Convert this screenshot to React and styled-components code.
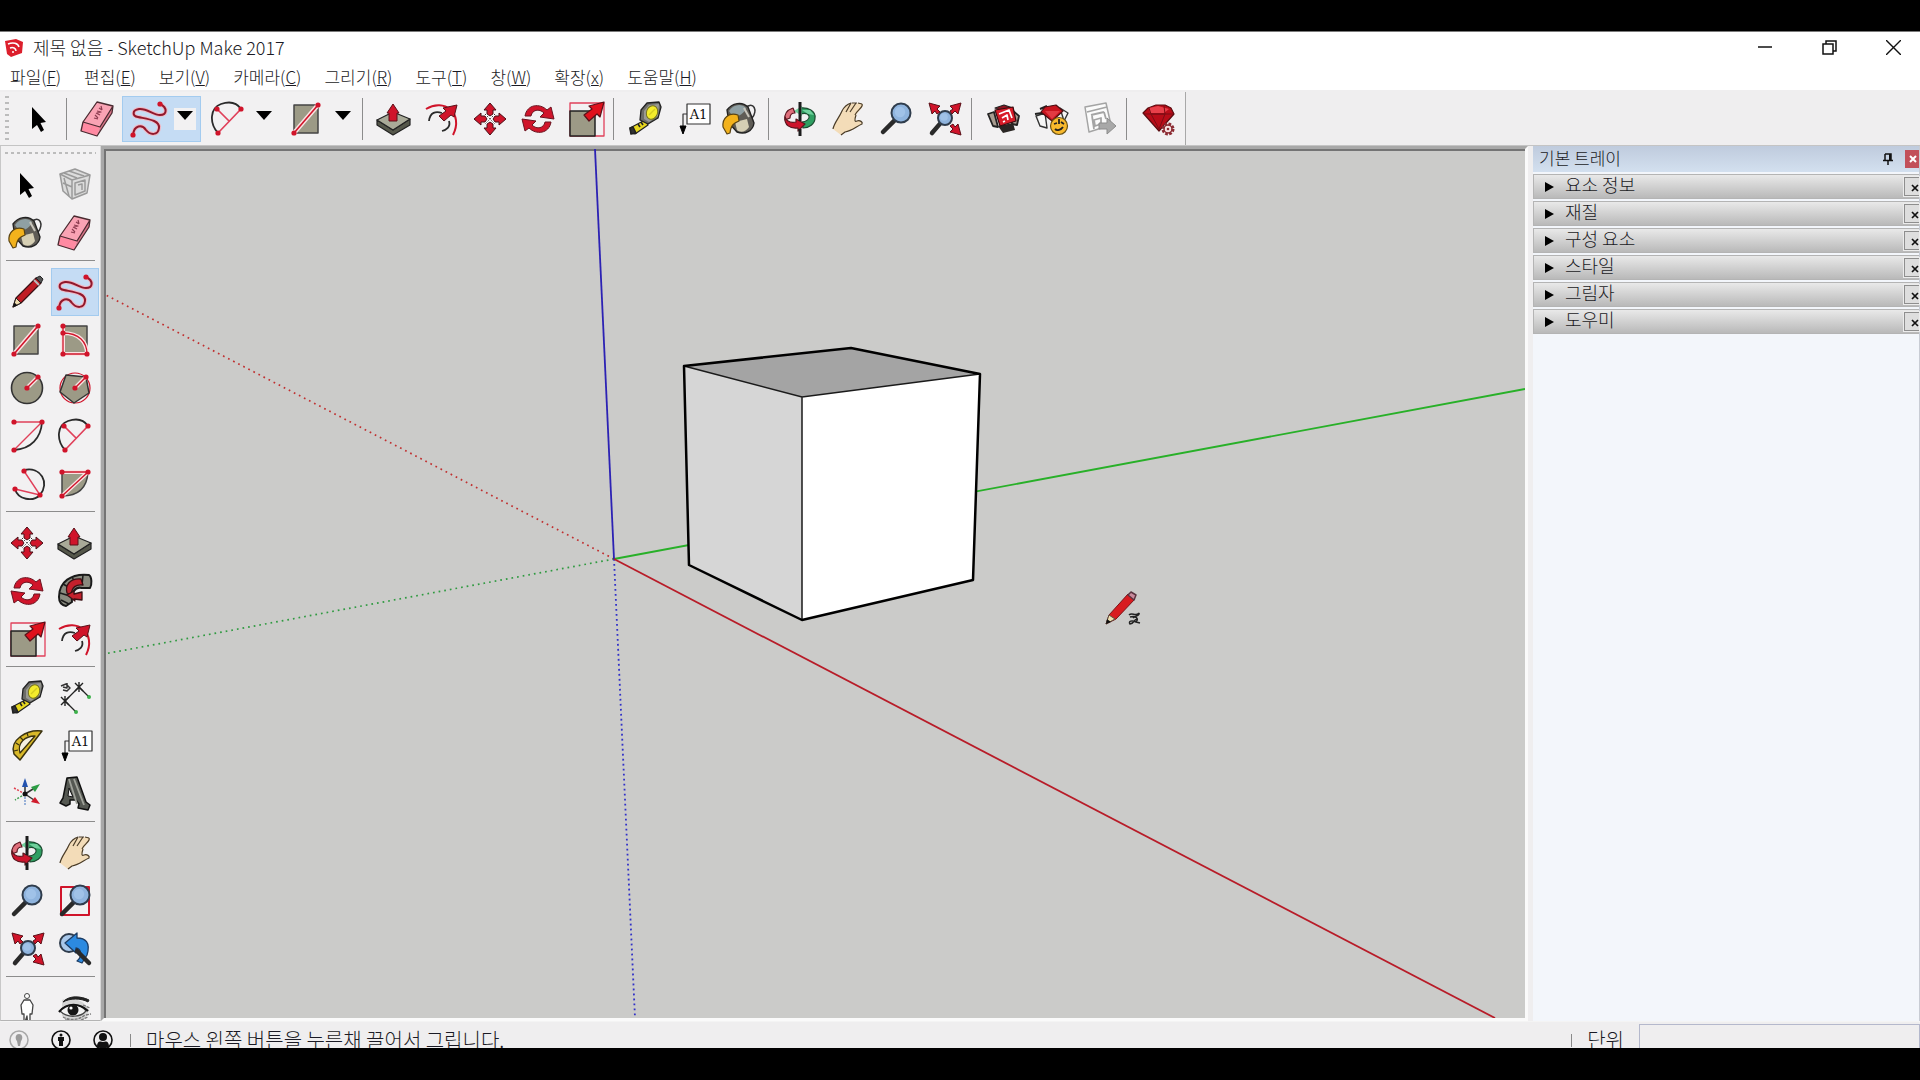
import React from 'react';
import styled, { createGlobalStyle, css } from 'styled-components';

const GlobalStyle = createGlobalStyle`
  *, *::before, *::after { box-sizing: border-box; }
  body { margin: 0; background: #000; }
  button { font: inherit; color: inherit; background: none; border: 0; padding: 0; margin: 0; }
  svg { display: block; flex: none; }
`;

const Screen = styled.div`
  height: 100vh;
  padding: 31px 0 32px;
  background: #000;
  display: flex;
  font-family: 'Noto Sans CJK KR', 'Open Sans', sans-serif;
  font-size: 18px;
  font-weight: 300;
  color: #1a1a24;
`;

const Window = styled.main`
  flex: 1;
  min-width: 0;
  display: flex;
  flex-direction: column;
  overflow: hidden;
  background: #efeeef;
  border-top: 1px solid #7a7a7a;
`;

const TitleBar = styled.header`
  height: 32px;
  flex: none;
  display: flex;
  align-items: center;
  gap: 9px;
  padding-left: 4px;
  background: #fff;
`;

const Title = styled.h1`
  margin: 0;
  flex: 1;
  font-size: 18px;
  font-weight: inherit;
  line-height: 30px;
  padding-bottom: 2px;
`;

const WindowControls = styled.div`
  display: flex;
  gap: 10px;
`;

const WindowButton = styled.button`
  width: 54px;
  height: 28px;
  padding-bottom: 2px;
  display: flex;
  align-items: center;
  justify-content: center;
`;

const MenuBar = styled.nav`
  height: 26px;
  flex: none;
  display: flex;
  align-items: center;
  gap: 23px;
  padding-left: 10px;
  background: #fff;
  font-size: 17px;
`;

const MenuItem = styled.button`
  white-space: nowrap;
  line-height: 26px;
`;

const TopBar = styled.div`
  height: 56px;
  flex: none;
  display: flex;
  border-bottom: 1px solid #c4c4c4;
`;

const Toolbar = styled.div`
  display: flex;
  align-items: center;
  background: #f2f1f2;
  margin-top: 2px;
  border-right: 1px solid #a8a8a8;
  padding: 2px 0;
`;

const Grip = styled.div`
  flex: none;
  ${(p) =>
    p.$vertical
      ? css`
          width: 4px;
          height: 46px;
          margin: 0 6px 0 5px;
          background: repeating-linear-gradient(to bottom, #bcbcbc 0 2px, transparent 2px 6px);
        `
      : css`
          height: 2px;
          margin: 6px 4px 7px;
          background: repeating-linear-gradient(to right, #bcbcbc 0 3px, transparent 3px 6px);
        `}
`;

const ToolGroup = styled.div`
  display: flex;
  align-items: center;
  padding: 0 3px 0 ${(p) => (p.$first ? 0 : 7)}px;
`;

const Divider = styled.div`
  width: 1px;
  height: 42px;
  background: #8c8c8c;
`;

const ToolButton = styled.button`
  width: 48px;
  height: ${(p) => (p.$tall ? 48 : 46)}px;
  display: flex;
  align-items: center;
  justify-content: center;
  ${(p) =>
    p.$active &&
    css`
      background: #c5dcf4;
      border: 1px solid #a3cbef;
    `}
`;

const SplitTool = styled.div`
  width: 79px;
  height: 46px;
  display: flex;
  align-items: center;
  justify-content: space-between;
  padding: 0 4px 0 6px;
  border: 1px solid ${(p) => (p.$active ? '#a3cbef' : 'transparent')};
  background: ${(p) => (p.$active ? '#c5dcf4' : 'transparent')};
`;

const DropButton = styled.button`
  width: 22px;
  height: 22px;
  display: flex;
  justify-content: center;
  padding-top: 3px;
  background: #f2f1f2;
`;

const Body = styled.div`
  flex: 1;
  min-height: 0;
  display: flex;
`;

const Dock = styled.aside`
  width: 101px;
  flex: none;
  overflow: hidden;
  background: #f2f1f2;
  border-bottom: 1px solid #b4b4b4;
  border-left: 1px solid #c8c8c8;
  border-right: 1px solid #d8d8d8;
`;

const DockGroup = styled.div`
  display: grid;
  grid-template-columns: 48px 48px;
  margin: 0 5px;
  padding: ${(p) => (p.$first ? 0 : 7)}px 0 3px;
  border-top: ${(p) => (p.$first ? 0 : 1)}px solid #8c8c8c;
  justify-content: center;
`;

const Viewport = styled.section`
  flex: 1;
  min-width: 0;
  margin-right: 5px;
  background: #cbcbc9;
  border: 3px solid #fafafa;
  border-left-color: #a8a8a8;
  border-top-color: #a8a8a8;
  box-shadow: inset 2px 2px #747474;
  overflow: hidden;
`;

const Scene = styled.svg`
  width: 100%;
  height: 100%;
`;

const Tray = styled.aside`
  width: 387px;
  flex: none;
  background: #f3f6fb;
  border-right: 1px solid #c8ccd4;
`;

const TrayHeader = styled.div`
  height: 26px;
  display: flex;
  align-items: center;
  padding-left: 6px;
  background: linear-gradient(#bfcbdd, #d3e0ef);
`;

const TrayTitle = styled.h2`
  margin: 0;
  flex: 1;
  font-size: 17px;
  font-weight: inherit;
  line-height: 22px;
  padding-bottom: 3px;
`;

const PinButton = styled.button`
  width: 18px;
  height: 18px;
  margin-right: 8px;
  display: flex;
  align-items: center;
  justify-content: center;
`;

const TrayClose = styled.button`
  width: 14px;
  height: 18px;
  display: flex;
  align-items: center;
  justify-content: flex-end;
  padding-right: 2px;
  background: #c2505a;
`;

const TrayList = styled.ul`
  list-style: none;
  margin: 0;
  padding: 2px 0 0;
`;

const TrayItem = styled.li`
  height: 25px;
  margin-bottom: 2px;
  display: flex;
  align-items: center;
  border: 1px solid #b4b4b4;
  border-right: 0;
  background: linear-gradient(#e9e9e9, #b9b9b9);
`;

const TrayToggle = styled.button`
  flex: 1;
  display: flex;
  align-items: center;
  gap: 11px;
  padding-left: 11px;
  line-height: 23px;
`;

const ItemLabel = styled.span`
  padding-bottom: 4px;
  line-height: 19px;
`;

const ItemClose = styled.button`
  width: 15px;
  height: 19px;
  display: flex;
  align-items: center;
  justify-content: flex-end;
  padding-top: 2px;
  background: #dedede;
  border: 1px solid #8e8e8e;
  border-right: 0;
  outline: 1px solid #ececec;
`;

const StatusBar = styled.footer`
  height: 27px;
  flex: none;
  overflow: hidden;
  display: flex;
  align-items: flex-start;
  border-top: 1px solid #f4f4f4;
`;

const StatusCell = styled.div`
  height: 36px;
  display: flex;
  align-items: center;
`;

const StatusButton = styled.button`
  width: 20px;
  height: 20px;
`;

const StatusIcons = styled(StatusCell)`
  gap: 22px;
  padding: 0 17px 0 9px;
`;

const StatusDivider = styled.div`
  width: 1px;
  height: 13px;
  background: #8a8a8a;
`;

const StatusText = styled(StatusCell)`
  flex: 1;
  padding-left: 15px;
  font-size: 20px;
  line-height: 36px;
  white-space: nowrap;
`;

const UnitLabel = styled.label`
  height: 36px;
  padding: 0 15px;
  line-height: 36px;
  font-size: 20px;
`;

const UnitInput = styled.input`
  width: 281px;
  height: 30px;
  margin-top: 2px;
  border: 1px solid #b4b8cc;
  background: #efeeef;
  font: inherit;
  padding: 0 6px;
`;

/* ---------- icons ---------- */

const RED = '#d0142a';
const ROSE = '#e0405a';
const KHAKI = '#9c9a86';

const Icon = ({ children, size = 40 }) => (
  <svg width={size} height={size} viewBox="0 0 40 40" fill="none" strokeLinejoin="round" aria-hidden="true">
    {children}
  </svg>
);

const Dot = ({ x, y }) => <circle cx={x} cy={y} r="2.6" fill={RED} />;

const ArrowNE = ({ x = 0, y = 0 }) => (
  <path
    transform={`translate(${x} ${y})`}
    d="M37 3L33 18L30 15L22 22L17 16L25 10L22 7Z"
    fill="#e0101c"
    stroke="#5a1018"
    strokeWidth="1.2"
  />
);

const Select = () => (
  <Icon>
    <path d="M13 8V30L18 26L22 33L25 31L21.500 24L27 23Z" fill="#000" />
  </Icon>
);

const Eraser = () => (
  <Icon>
    <g transform="translate(-1 0)">
      <path d="M20 3L36 7L23 28L6 23Z" fill="#f9a3b4" />
      <path d="M6 23L23 28L20 37L4 32Z" fill="#ff8aa2" />
      <path d="M36 7L35 14L20 37L23 28Z" fill="#d97488" />
      <path d="M20 3L36 7L35 14L20 37L4 32L6 23ZM6 23L23 28L36 7" stroke="#4a2a30" strokeWidth="1.300" />
      <path d="M17 19L21 20M18 16l3 3M19 14l4 2M20 12l4 1-4 1M22 9l3 2M24 7l1 4" stroke="#8c3c50" strokeWidth="1.200" />
    </g>
  </Icon>
);

const Freehand = () => (
  <Icon>
    <path d="M31 5C39 9 38 16 31 16C24 16 18 9 10 10C3 11 3 17 9 18C18 20 31 21 30 29C29 37 21 36 17 31C13 25 5 26 4 36" stroke="#f0b8c4" strokeWidth="4" />
    <path d="M31 5C39 9 38 16 31 16C24 16 18 9 10 10C3 11 3 17 9 18C18 20 31 21 30 29C29 37 21 36 17 31C13 25 5 26 4 36" stroke="#90182c" strokeWidth="2" />
    <Dot x={31} y={5} />
    <Dot x={4} y={36} />
  </Icon>
);

const TwoPointArc = () => (
  <Icon>
    <path d="M10 34C1 24 2 9 13 5C22 2 29 4 33 10" stroke="#2a2a2a" strokeWidth="1.800" />
    <path d="M10 34L33 10M9 10L21 22" stroke={ROSE} strokeWidth="1.700" />
    <Dot x={9} y={10} />
    <Dot x={33} y={10} />
    <Dot x={10} y={34} />
  </Icon>
);

const Rectangle = () => (
  <Icon>
    <path d="M7 6H31V34H7Z" fill={KHAKI} stroke="#444" strokeWidth="1.500" />
    <path d="M7 34L31 6" stroke="#fbe3e3" strokeWidth="4.500" />
    <path d="M7 34L31 6" stroke={RED} strokeWidth="1.600" />
    <Dot x={7} y={34} />
    <Dot x={31} y={6} />
  </Icon>
);

const RotatedRectangle = () => (
  <Icon>
    <path d="M8 6H32V34H8Z" fill={KHAKI} stroke="#444" strokeWidth="1.500" />
    <path d="M8 6V34H32C32 22 24 13 8 13" stroke="#fbe3e3" strokeWidth="4" />
    <path d="M8 6V34H32C32 22 24 13 8 13" stroke={RED} strokeWidth="1.300" />
    <Dot x={8} y={6} />
    <Dot x={8} y={13} />
    <Dot x={8} y={34} />
    <Dot x={32} y={34} />
  </Icon>
);

const CircleTool = () => (
  <Icon>
    <circle cx="20" cy="20" r="15.500" fill={KHAKI} stroke="#333" strokeWidth="1.600" />
    <path d="M20 20L31 9" stroke="#fbe3e3" strokeWidth="4" />
    <path d="M20 20L31 9" stroke={RED} strokeWidth="1.400" />
    <Dot x={20} y={20} />
    <Dot x={31} y={9} />
  </Icon>
);

const Polygon = () => (
  <Icon>
    <circle cx="20" cy="20" r="15" stroke={RED} strokeWidth="1.200" />
    <path d="M11 7L31 9L34 25L19 35L5 24Z" fill={KHAKI} stroke="#333" strokeWidth="1.500" />
    <path d="M20 20L31 9" stroke="#fbe3e3" strokeWidth="4" />
    <path d="M20 20L31 9" stroke={RED} strokeWidth="1.400" />
    <Dot x={20} y={20} />
    <Dot x={31} y={9} />
  </Icon>
);

const ArcTool = () => (
  <Icon>
    <path d="M35 6C34 22 24 33 7 34" stroke="#2a2a2a" strokeWidth="1.800" />
    <path d="M7 6H35L7 34" stroke={ROSE} strokeWidth="1.400" />
    <Dot x={7} y={6} />
    <Dot x={35} y={6} />
    <Dot x={7} y={34} />
  </Icon>
);

const ThreePointArc = () => (
  <Icon>
    <path d="M17 6C34 2 43 19 33 31C26 38 11 36 8 25" stroke="#2a2a2a" strokeWidth="1.800" />
    <path d="M17 7L33 31L8 25" stroke={ROSE} strokeWidth="1.400" />
    <Dot x={17} y={7} />
    <Dot x={8} y={25} />
    <Dot x={33} y={31} />
  </Icon>
);

const Pie = () => (
  <Icon>
    <path d="M7 8H33C32 24 24 32 7 32Z" fill={KHAKI} stroke="#444" strokeWidth="1.500" />
    <path d="M7 8H33L7 32" stroke="#fbe3e3" strokeWidth="4" />
    <path d="M7 8H33L7 32" stroke={RED} strokeWidth="1.400" />
    <Dot x={7} y={8} />
    <Dot x={33} y={8} />
    <Dot x={7} y={32} />
  </Icon>
);

const PushPull = () => (
  <Icon>
    <path d="M3 21V26L19 36L36 26V20L19 31Z" fill="#55574a" stroke="#222" strokeWidth="1.200" />
    <path d="M3 21L19 13L36 20L19 31Z" fill="#a9aa98" stroke="#222" strokeWidth="1.200" />
    <path d="M19 5L25 14H23V22H15V14H13Z" fill={RED} stroke="#5a1018" strokeWidth="1" />
  </Icon>
);

const Offset = () => (
  <Icon>
    <path d="M4 10C22 -1 42 14 31 36" stroke={RED} strokeWidth="2" />
    <path d="M7 22C8 13 14 12 20 14M27 22C29 28 24 31 20 32" stroke="#2a2a2a" strokeWidth="1.800" />
    <path d="M35 6L32 18L29 16L22 22L17 17L24 12L21 9Z" fill={RED} stroke="#5a1018" strokeWidth="1" />
  </Icon>
);

const Move = () => (
  <Icon>
    <circle cx="20" cy="20" r="7" fill="#fff" />
    {[0, 90, 180, 270].map((a) => (
      <path
        key={a}
        transform={`rotate(${a} 20 20)`}
        d="M20 4L26 11H23V15L20 17L17 15V11H14Z"
        fill={RED}
        stroke="#4a1018"
        strokeWidth="1"
      />
    ))}
    <path d="M15 15L25 25M25 15L15 25" stroke="#333" strokeWidth="1" strokeDasharray="1.500 1.500" />
  </Icon>
);

const Rotate = () => (
  <Icon>
    {[0, 180].map((a) => (
      <path
        key={a}
        transform={`rotate(${a} 20 20)`}
        d="M7 17C9 5 22 4 29 11L33 8L36 20L22 18L26 14C21 9 14 11 13 17Z"
        fill={RED}
        stroke="#6a1420"
        strokeWidth="1"
      />
    ))}
  </Icon>
);

const Scale = () => (
  <Icon>
    <path d="M4 4H38V37H4Z" stroke={ROSE} strokeWidth="1.300" />
    <path d="M4 12H29V37H4Z" fill={KHAKI} stroke="#222" strokeWidth="1.500" />
    <ArrowNE x={1} />
  </Icon>
);

const Tape = () => (
  <Icon>
    <path d="M20 21L23 26L10 35L6 34L5 29Z" fill="#e8d820" stroke="#222" strokeWidth="1.200" />
    <path d="M5 29L8 28L11 34L6 35ZM13 25l2 3M16 23l2 3" stroke="#222" strokeWidth="1.600" fill="#333" />
    <path d="M16 11L22 4L34 3L36 8L33 19L23 25L15 21Z" fill="#6c6c68" stroke="#222" strokeWidth="1.300" />
    <path d="M19 12L24 6L34 5L33 17L24 23L19 20Z" fill="#9a9a94" />
    <ellipse cx="27" cy="13.500" rx="5.500" ry="7" transform="rotate(20 27 13.500)" fill="#f4ec2c" stroke="#77741c" strokeWidth="1" />
    <path d="M24 16L30 10" stroke="#d6cc20" strokeWidth="1.500" />
  </Icon>
);

const TextTool = () => (
  <Icon>
    <path d="M14 15H10V28" stroke="#333" strokeWidth="1.200" />
    <path d="M7 27H13L10 35Z" fill="#000" stroke="#000" />
    <path d="M14 5H37V25H14Z" fill="#fff" stroke="#333" strokeWidth="1.200" />
    <text x="25.500" y="20" textAnchor="middle" fontFamily="'DejaVu Serif', serif" fontSize="13" fontWeight="400" fill="#111">A1</text>
  </Icon>
);

const Bucket = () => (
  <Icon>
    <g transform="translate(-3 0)">
      <path d="M27 9C36 1 40 12 34 19" stroke="#333" strokeWidth="1.600" />
      <path d="M9 11C14 4 24 2 30 8L36 24C35 32 27 36 19 33L11 24Z" fill="#5f5c56" stroke="#222" strokeWidth="1.400" />
      <path d="M11 12C15 5 24 4 28 9C27 14 20 18 15 18Z" fill="#8fa0a4" />
      <path d="M17 23L29 20L31 28C28 33 22 34 19 31Z" fill="#d6cfb4" />
      <path d="M26 9L31 18" stroke="#c9c6bc" strokeWidth="2" />
      <path d="M20 16C11 13 4 19 5 28L9 35L12 34C13 26 16 24 21 22Z" fill="#f3b21c" stroke="#5a4414" strokeWidth="1.200" />
    </g>
  </Icon>
);

const Orbit = () => (
  <Icon>
    <path d="M20 9C28 8 36 12 35 19C35 25 29 29 23 29L22 23C26 23 30 20 29 17C28 14 24 14 20 15Z" fill="#2f9f62" stroke="#1c4a30" strokeWidth="1.200" />
    <path d="M14 12L22 7V17Z M22 11h8l4 5-6-1z" fill="#6fd09c" />
    <path d="M13 9C7 11 4 15 5 21L10 19C10 16 12 14 15 14Z" fill="#e0707c" stroke="#5a1820" strokeWidth="1.200" />
    <path d="M5 18C7 23 11 24 16 23V20L25 25L18 32V29C10 30 4 26 5 18Z" fill="#cc142c" stroke="#5a1820" strokeWidth="1.200" />
    <path d="M20 3V22M20 30V37" stroke="#1c1c1c" strokeWidth="3" />
  </Icon>
);

const Hand = () => (
  <Icon>
    <path d="M5 30C6 24 11 19 14 12C17 6 20 5 23 5L25 4L28 5C31 3 34 4 35 6C35 9 29 13 28 17C28 20 26 22 28 22C31 20 35 22 34 25C29 27 24 32 17 33L13 36Z" fill="#f3dcb8" />
    <path d="M5 30C6 24 11 19 14 12C17 6 20 5 23 4L18 13M28 4L22 13M24 4L29 4M34 5C36 8 29 11 27 16M30 4L34 5M28 16C26 22 27 23 29 22C32 21 35 23 34 25C29 27 24 32 17 33L13 36" stroke="#4a3c28" strokeWidth="1.200" />
  </Icon>
);

const Lens = ({ x, y, r, hx, hy }) => (
  <>
    <path d={`M${x - r * 0.7} ${y + r * 0.8}L${hx} ${hy}`} stroke="#2a2a2a" strokeWidth="4.500" strokeLinecap="round" />
    <circle cx={x} cy={y} r={r} fill="#8fb4de" stroke="#2f3c4c" strokeWidth="2" />
    <circle cx={x - 1} cy={y - 1} r={r * 0.55} fill="#a0c2e8" />
  </>
);

const Zoom = () => (
  <Icon>
    <Lens x={25} y={14} r={9.500} hx={7} hy={33} />
  </Icon>
);

const ZoomWindow = () => (
  <Icon>
    <path d="M6 6H34V34H6Z" stroke={RED} strokeWidth="2" />
    <Lens x={25} y={14} r={9.500} hx={7} hy={33} />
  </Icon>
);

const CornerArrow = ({ angle }) => (
  <path
    transform={`rotate(${angle} 20 20)`}
    d="M4 4L15 7L12 10L15 13L12 15L10 12L7 15Z"
    fill={RED}
    stroke="#5a1018"
    strokeWidth="1"
  />
);

const ZoomExtents = () => (
  <Icon>
    <g transform="translate(1 0)">
      <Lens x={20} y={19} r={7} hx={7} hy={34} />
      <CornerArrow angle={0} />
      <CornerArrow angle={90} />
      <CornerArrow angle={180} />
    </g>
  </Icon>
);

const PreviousView = () => (
  <Icon>
    <circle cx="14" cy="14" r="9" fill="#a9c8ea" stroke="#2f3c4c" strokeWidth="2" />
    <path d="M10 14L22 4V9C30 9 36 13 32 26L27 34L22 32C27 28 27 20 21 19V24Z" fill="#2c8ae0" stroke="#1c3c64" strokeWidth="1.300" />
    <path d="M22 22L34 34" stroke="#2a2a2a" strokeWidth="4.500" strokeLinecap="round" />
  </Icon>
);

const Warehouse = () => (
  <Icon>
    <path d="M5 15L11 13L15 28L10 27ZM28 10L36 17L34 26L29 25Z" fill="#a89c90" stroke="#222" strokeWidth="1.800" />
    <path d="M15 27L30 24L32 31L20 34Z" fill="#2a2624" />
    <path d="M12 9L21 6L30 9L20 12Z" fill="#8e1420" stroke="#222" strokeWidth="1.200" />
    <path d="M12 11L30 8L33 22L17 27Z" fill="#d81c28" stroke="#3a0c10" strokeWidth="1.200" />
    <path d="M16 15L26 11L29 19M19 19L24 16L25 21M20 23L22 22" stroke="#fff" strokeWidth="1.700" />
  </Icon>
);

const ExtensionWarehouse = () => (
  <Icon>
    <path d="M5 17L14 14L16 29L9 27ZM29 9L37 14L33 22Z" fill="#f6f6f6" stroke="#333" strokeWidth="1.400" />
    <path d="M4 15L11 14M9 10L16 7" stroke="#222" strokeWidth="2" />
    <path d="M14 8L25 6L32 12L21 22L10 13Z" fill="#c8141e" stroke="#4a0c10" strokeWidth="1.200" />
    <path d="M14 12H29L21 20Z" fill="#e23a42" />
    <circle cx="28" cy="27" r="8.500" fill="#f8b92c" stroke="#6a5214" strokeWidth="1.200" />
    <path d="M23 25L26 24M30 23L33 25M24 30C26 32 30 31 32 28M28 20V25" stroke="#222" strokeWidth="1.800" />
  </Icon>
);

const SendLayout = () => (
  <Icon>
    <g transform="translate(1 0)">
      <path d="M5 8L26 4L31 26L9 33Z" fill="#fbfbfb" stroke="#a4a4a4" strokeWidth="1.500" />
      <path d="M7 13L27 8M11 16L24 13M12 17L14 30M24 13L26 20M14 21L21 19V25L15 27Z" stroke="#a4a4a4" strokeWidth="1.800" />
      <path d="M19 24H27V19L36 27L27 35V30H19Z" fill="#a8a8a8" stroke="#8c8c8c" strokeWidth="1" />
    </g>
  </Icon>
);

const ExtensionManager = () => (
  <Icon>
    <path d="M5 14L10 9L18 6H27L33 9L36 15L21 32Z" fill="#b80c18" stroke="#5a0c10" strokeWidth="1.200" />
    <path d="M11 9L20 7L31 10L26 14H12Z" fill="#e8404a" />
    <path d="M13 15H27L21 30ZM6 15H35M11 9L13 15M26 7L27 15" stroke="#7a0c14" strokeWidth="1" />
    <circle cx="30" cy="30" r="5" fill="#f6e4e4" stroke="#8c2c34" strokeWidth="3" strokeDasharray="2.600 1.300" />
    <circle cx="30" cy="30" r="4" stroke="#8c2c34" strokeWidth="1.500" />
    <circle cx="30" cy="30" r="1.300" fill="#8c2c34" />
  </Icon>
);

const Component = () => (
  <Icon>
    <path d="M5 9L20 4L35 10L32 28L17 34L8 26Z" fill="#dcdcdc" stroke="#9a9a9a" strokeWidth="1.500" />
    <path d="M5 9L17 15L35 10M17 15V34M9 8L22 13M14 6L29 11M9 13L14 31M8 18L17 22M20 18L30 15V26L20 30ZM23 20L27 19V25" stroke="#9a9a9a" strokeWidth="1.500" />
  </Icon>
);

const Pencil = () => (
  <Icon>
    <path d="M6 35L9 26L29 6L34 11L14 31Z" fill="#c01c24" stroke="#3a1014" strokeWidth="1.200" />
    <path d="M29 6L33 4L36 7L34 11Z" fill="#555" stroke="#222" />
    <path d="M27 8L32 13" stroke="#bbb" strokeWidth="2" />
    <path d="M6 35L9 26L14 31Z" fill="#f0dcb0" stroke="#222" strokeWidth="1" />
    <path d="M6 35L7.500 30.500L10.500 33.500Z" fill="#111" />
  </Icon>
);

const FollowMe = () => (
  <Icon>
    <path d="M4 26C4 11 16 2 34 4C37 6 37 14 35 17L27 17C20 15 16 22 17 31L11 35C6 34 4 30 4 26Z" fill="#8a8b80" stroke="#1a1a1a" strokeWidth="2" />
    <path d="M5 22L15 25M8 13L17 18M17 6L21 13M28 4L27 14M6 29L14 33" stroke="#1a1a1a" strokeWidth="1.500" />
    <path d="M26 8C14 7 10 15 12 22L16 24C17 16 21 13 28 14Z" fill="#c4202c" stroke="#3a1014" strokeWidth="1.300" />
    <path d="M12 24L19 20L19 23L27 21V29L19 28L20 30Z" fill="#c4202c" stroke="#3a1014" strokeWidth="1.300" />
  </Icon>
);

const Dimension = () => (
  <Icon>
    <path d="M10 23L24 9L34 19M10 23L21 34" stroke="#222" strokeWidth="1.300" />
    <path d="M6 19L14 27M14 19L6 27M10 18V28M20 5L28 13M28 5L20 13M24 4V14" stroke="#222" strokeWidth="1.400" />
    <path d="M6 8L11 6L15 10L12 13L8 12M12 5V10L8 9" stroke="#333" strokeWidth="1.500" />
    <circle cx="34" cy="19" r="2" fill="#3cb04a" />
    <circle cx="21" cy="34" r="2" fill="#3cb04a" />
  </Icon>
);

const Protractor = () => (
  <Icon>
    <path d="M35 5C20 3 2 14 7 28L13 34Z" fill="#d8b828" stroke="#3a3210" strokeWidth="1.500" />
    <path d="M28 10C18 10 10 17 13 27Z" fill="#f6f0e0" stroke="#3a3210" strokeWidth="1.300" />
    <path d="M9 17l3 2M13 11l3 3M20 7l1 3M7 25l4-1" stroke="#3a3210" strokeWidth="1.200" />
  </Icon>
);

const Axes = () => (
  <Icon>
    <path d="M18 20V11M18 20L26 15M18 20L27 26" stroke="#333" strokeWidth="1.500" />
    <path d="M18 20V32" stroke="#7c9cd0" strokeWidth="1.500" strokeDasharray="2 1" />
    <path d="M18 20L7 14" stroke="#e04050" strokeWidth="1.500" strokeDasharray="2 1.500" />
    <path d="M18 20L8 26" stroke="#40a050" strokeWidth="1.500" strokeDasharray="2 1.500" />
    <path d="M18 4L21 13H15Z" fill="#2454b0" />
    <path d="M33 10L28 18L24 13Z" fill="#2c9c44" />
    <path d="M33 30L24 28L28 23Z" fill="#d01c2c" />
    <circle cx="18" cy="20" r="2.500" fill="#111" />
  </Icon>
);

const Text3D = () => (
  <Icon>
    <path d="M12 4L22 3L31 28L35 31L33 36L23 34L24 30L21 26L15 26L15 30L11 32L5 29L8 24Z" fill="#555852" stroke="#111" strokeWidth="1.500" />
    <path d="M14 14L18 23L13 22Z" fill="#f2f1f2" stroke="#111" strokeWidth="1" />
    <path d="M14 5L22 30M19 5L29 31" stroke="#a0a29a" strokeWidth="1.800" />
  </Icon>
);

const Walk = () => (
  <Icon>
    <circle cx="20" cy="8" r="2.500" fill="#fff" stroke="#444" />
    <path d="M17 12H23L26 17L25 26H23V34H20.500L20 28L18 34H17V26H15L14 17Z" fill="#fff" stroke="#444" strokeWidth="1.300" />
    <path d="M15 34H25" stroke={RED} strokeWidth="1.500" strokeDasharray="2 2" />
  </Icon>
);

const LookAround = () => (
  <Icon>
    <path d="M7 12C14 9 28 10 34 22L31 30C22 35 12 33 7 28Z" fill="#d4d4d4" />
    <path d="M8 14C14 7 26 8 34 12L33 14C26 10 15 10 8 14Z" fill="#222" stroke="#222" />
    <path d="M5 23C11 15 25 15 31 23C26 29 13 31 5 23Z" fill="#f2f2f2" stroke="#444" strokeWidth="1.200" />
    <path d="M4 24C12 14 25 15 33 23" stroke="#111" strokeWidth="2.200" />
    <circle cx="18" cy="22" r="5.500" fill="#151515" />
    <circle cx="16" cy="20" r="1.600" fill="#fff" />
    <path d="M8 29C15 33 24 32 30 27M28 17L35 20M31 27L36 26M10 32L22 34M26 32L33 29" stroke="#777" strokeWidth="1.300" strokeDasharray="3 1" />
  </Icon>
);

const Logo = () => (
  <svg width="20" height="20" viewBox="0 0 20 20" fill="none" aria-hidden="true">
    <path d="M1 3L12 1L19 4L18 15L7 19L3 16Z" fill="#dc1f2c" />
    <path d="M4 6C9 4 14 5 15 9M6 10C9 9 12 10 12 13M8 14L10 14" stroke="#fff" strokeWidth="1.500" />
  </svg>
);

const CaretDown = () => (
  <svg width="16" height="10" viewBox="0 0 16 10" aria-hidden="true">
    <path d="M0 0H16L8 9Z" fill="#000" />
  </svg>
);

const CaretRight = () => (
  <svg width="9" height="10" viewBox="0 0 9 10" aria-hidden="true">
    <path d="M0 0L9 5L0 10Z" fill="#000" />
  </svg>
);

const Cross = ({ size = 7, color = '#111', width = 2 }) => (
  <svg width={size} height={size} viewBox="0 0 8 8" aria-hidden="true">
    <path d="M1 1L7 7M7 1L1 7" stroke={color} strokeWidth={width} />
  </svg>
);

const GeoIcon = () => (
  <svg width="20" height="20" viewBox="0 0 20 20" fill="none" aria-hidden="true">
    <circle cx="10" cy="10" r="9" stroke="#a8a8a8" strokeWidth="1.500" />
    <path d="M10 4C14 4 14 9 12 11L11 16H9L8 11C6 9 6 4 10 4Z" fill="#9a9a9a" />
  </svg>
);

const CreditIcon = () => (
  <svg width="20" height="20" viewBox="0 0 20 20" fill="none" aria-hidden="true">
    <circle cx="10" cy="10" r="9" stroke="#111" strokeWidth="1.600" />
    <circle cx="10" cy="5" r="1.500" fill="#111" />
    <path d="M7 7H13V11H12V16H8V11H7Z" fill="#111" />
  </svg>
);

const UserIcon = () => (
  <svg width="20" height="20" viewBox="0 0 20 20" fill="none" aria-hidden="true">
    <circle cx="10" cy="10" r="9" stroke="#111" strokeWidth="1.600" />
    <circle cx="10" cy="7" r="4" fill="#111" />
    <path d="M4 17C4 11 7 11 10 12C13 11 16 11 16 17L10 19Z" fill="#111" />
  </svg>
);

/* ---------- data ---------- */

const menus = [
  ['파일', 'F'], ['편집', 'E'], ['보기', 'V'], ['카메라', 'C'], ['그리기', 'R'],
  ['도구', 'T'], ['창', 'W'], ['확장', 'x'], ['도움말', 'H'],
];

const splitTools = [
  { label: '자유형', Glyph: Freehand, active: true },
  { label: '호', Glyph: TwoPointArc },
  { label: '직사각형', Glyph: Rectangle },
];

const toolGroups = [
  [['밀기/끌기', PushPull], ['오프셋', Offset], ['이동', Move], ['회전', Rotate], ['배율', Scale]],
  [['줄자', Tape], ['텍스트', TextTool], ['페인트통', Bucket]],
  [['궤도', Orbit], ['이동 보기', Hand], ['확대/축소', Zoom], ['범위 확대', ZoomExtents]],
  [['3D Warehouse', Warehouse], ['Extension Warehouse', ExtensionWarehouse], ['LayOut', SendLayout]],
  [['확장 관리자', ExtensionManager]],
];

const dockGroups = [
  [['선택', Select], ['구성 요소 만들기', Component], ['페인트통', Bucket], ['지우개', Eraser]],
  [
    ['선', Pencil], ['자유형', Freehand, true], ['직사각형', Rectangle], ['회전된 직사각형', RotatedRectangle],
    ['원', CircleTool], ['다각형', Polygon], ['호', ArcTool], ['2점 호', TwoPointArc], ['3점 호', ThreePointArc], ['파이', Pie],
  ],
  [['이동', Move], ['밀기/끌기', PushPull], ['회전', Rotate], ['따라가기', FollowMe], ['배율', Scale], ['오프셋', Offset]],
  [['줄자', Tape], ['치수', Dimension], ['각도기', Protractor], ['텍스트', TextTool], ['축', Axes], ['3D 텍스트', Text3D]],
  [['궤도', Orbit], ['이동 보기', Hand], ['확대/축소', Zoom], ['창 확대', ZoomWindow], ['범위 확대', ZoomExtents], ['이전', PreviousView]],
  [['걷기', Walk], ['둘러보기', LookAround]],
];

const trayPanels = ['요소 정보', '재질', '구성 요소', '스타일', '그림자', '도우미'];

/* ---------- parts ---------- */

function TopToolbar() {
  return (
    <TopBar>
      <Toolbar role="toolbar" aria-label="시작하기">
        <ToolGroup $first>
          <Grip $vertical />
          <ToolButton aria-label="선택"><Select /></ToolButton>
        </ToolGroup>
        <Divider />
        <ToolGroup>
          <ToolButton aria-label="지우개"><Eraser /></ToolButton>
          {splitTools.map(({ label, Glyph, active }) => (
            <SplitTool key={label} $active={active}>
              <button aria-label={label}><Glyph /></button>
              <DropButton aria-label={`${label} 목록`}><CaretDown /></DropButton>
            </SplitTool>
          ))}
        </ToolGroup>
        {toolGroups.map((group) => (
          <React.Fragment key={group[0][0]}>
            <Divider />
            <ToolGroup>
              {group.map(([label, Glyph]) => (
                <ToolButton key={label} aria-label={label}><Glyph /></ToolButton>
              ))}
            </ToolGroup>
          </React.Fragment>
        ))}
      </Toolbar>
    </TopBar>
  );
}

function LargeToolSet() {
  return (
    <Dock aria-label="큰 도구 세트">
      <Grip />
      {dockGroups.map((group, i) => (
        <DockGroup key={i} $first={i === 0}>
          {group.map(([label, Glyph, active]) => (
            <ToolButton key={label} $tall $active={active} aria-label={label}><Glyph /></ToolButton>
          ))}
        </DockGroup>
      ))}
    </Dock>
  );
}

function ModelView() {
  return (
    <Viewport aria-label="모델">
      <Scene viewBox="104 149 1421 869" preserveAspectRatio="xMinYMin slice" fill="none">
        <path d="M614 559L104 294" stroke="#c03030" strokeWidth="1.700" strokeDasharray="1.700 4" />
        <path d="M614 559L104 654" stroke="#2f9a40" strokeWidth="1.700" strokeDasharray="1.700 4" />
        <path d="M614 559L635 1018" stroke="#3030c8" strokeWidth="1.800" strokeDasharray="1.800 3.200" />
        <path d="M614 559L1525 389" stroke="#28b028" strokeWidth="1.800" />
        <path d="M614 559L595 149" stroke="#2c22b4" strokeWidth="1.800" />
        <path d="M614 559L1495 1018" stroke="#b81c28" strokeWidth="1.800" />
        <path d="M684 366L851 348L980 374L802 397Z" fill="#a4a4a4" />
        <path d="M684 366L802 397V620L689 565Z" fill="#d6d6d6" />
        <path d="M802 397L980 374L973 580L802 620Z" fill="#fff" />
        <path d="M684 366L802 397L980 374M802 397V620" stroke="#1a1a1a" strokeWidth="1.500" />
        <path d="M684 366L851 348L980 374L973 580L802 620L689 565Z" stroke="#000" strokeWidth="2.500" strokeLinejoin="round" />
        <g strokeLinejoin="round">
          <path d="M1106 624L1109 615L1128 594L1135 599L1116 619Z" fill="#d81c20" stroke="#7a1418" />
          <path d="M1128 595L1131 592L1136 595L1134 600Z" fill="#c88a9c" stroke="#5c3440" strokeWidth="1.500" />
          <path d="M1106 624L1109 615L1115 619Z" fill="#f0e0b0" stroke="#5a5040" />
          <path d="M1106 624L1107 619L1111 622Z" fill="#111" />
          <path d="M1129 615C1132 612 1136 617 1139 613M1139 613C1140 616 1136 615 1133 618M1130 617C1136 615 1139 619 1136 622C1132 620 1128 621 1130 624C1134 624 1134 619 1137 619M1136 622L1140 623" stroke="#222" strokeWidth="1.500" />
        </g>
      </Scene>
    </Viewport>
  );
}

function DefaultTray() {
  return (
    <Tray>
      <TrayHeader>
        <TrayTitle>기본 트레이</TrayTitle>
        <PinButton aria-label="고정">
          <svg width="10" height="12" viewBox="0 0 10 12" fill="none">
            <path d="M2 1H8V7M2 1V7M0 7.500H10M5 8V12" stroke="#111" strokeWidth="1.500" />
            <path d="M6 1H8V7H6Z" fill="#111" />
          </svg>
        </PinButton>
        <TrayClose aria-label="트레이 닫기"><Cross size={8} color="#fff" /></TrayClose>
      </TrayHeader>
      <TrayList>
        {trayPanels.map((name) => (
          <TrayItem key={name}>
            <TrayToggle>
              <CaretRight />
              <ItemLabel>{name}</ItemLabel>
            </TrayToggle>
            <ItemClose aria-label={`${name} 닫기`}><Cross size={8} width={1.700} /></ItemClose>
          </TrayItem>
        ))}
      </TrayList>
    </Tray>
  );
}

export default function App() {
  return (
    <Screen>
      <GlobalStyle />
      <Window>
        <TitleBar>
          <Logo />
          <Title>제목 없음 - SketchUp Make 2017</Title>
          <WindowControls>
            <WindowButton aria-label="최소화">
              <svg width="14" height="14" viewBox="0 0 14 14"><path d="M0 7H14" stroke="#111" strokeWidth="1.500" /></svg>
            </WindowButton>
            <WindowButton aria-label="이전 크기로">
              <svg width="15" height="15" viewBox="0 0 15 15" fill="none">
                <path d="M1 4H11V14H1ZM4 4V1H14V11H11" stroke="#111" strokeWidth="1.500" />
              </svg>
            </WindowButton>
            <WindowButton aria-label="닫기">
              <svg width="15" height="15" viewBox="0 0 15 15"><path d="M0 0L15 15M15 0L0 15" stroke="#111" strokeWidth="1.400" /></svg>
            </WindowButton>
          </WindowControls>
        </TitleBar>
        <MenuBar>
          {menus.map(([name, key]) => (
            <MenuItem key={name}>{name}(<u>{key}</u>)</MenuItem>
          ))}
        </MenuBar>
        <TopToolbar />
        <Body>
          <LargeToolSet />
          <ModelView />
          <DefaultTray />
        </Body>
        <StatusBar>
          <StatusIcons>
            <StatusButton aria-label="지리적 위치"><GeoIcon /></StatusButton>
            <StatusButton aria-label="크레딧"><CreditIcon /></StatusButton>
            <StatusButton aria-label="로그인"><UserIcon /></StatusButton>
          </StatusIcons>
          <StatusCell><StatusDivider /></StatusCell>
          <StatusText>마우스 왼쪽 버튼을 누른채 끌어서 그립니다.</StatusText>
          <StatusCell><StatusDivider /></StatusCell>
          <UnitLabel htmlFor="unit">단위</UnitLabel>
          <UnitInput id="unit" type="text" />
        </StatusBar>
      </Window>
    </Screen>
  );
}
